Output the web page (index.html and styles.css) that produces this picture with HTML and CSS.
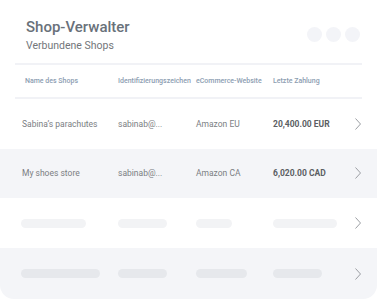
FILE: index.html
```html
<!DOCTYPE html>
<html lang="de">
<head>
<meta charset="utf-8">
<title>Shop-Verwalter</title>
<link rel="stylesheet" href="styles.css">
</head>
<body>
<div class="card">
  <header class="top">
    <div class="titles">
      <h1 class="title">Shop-Verwalter</h1>
      <p class="subtitle">Verbundene Shops</p>
    </div>
    <div class="dots"><span class="dot"></span><span class="dot"></span><span class="dot"></span></div>
  </header>
  <div class="thead">
    <span class="th">Name des Shops</span>
    <span class="th">Identifizierungszeichen</span>
    <span class="th">eCommerce-Website</span>
    <span class="th">Letzte Zahlung</span>
    <span></span>
  </div>
  <div class="row">
    <span class="cell">Sabina’s parachutes</span>
    <span class="cell">sabinab@...</span>
    <span class="cell">Amazon EU</span>
    <span class="cell amount">20,400.00 EUR</span>
    <svg class="chev" viewBox="0 0 6 12" width="6" height="12"><path d="M0.5 0.5 L5.5 6 L0.5 11.5" fill="none" stroke="#9b9ea3" stroke-width="1"/></svg>
  </div>
  <div class="row alt">
    <span class="cell">My shoes store</span>
    <span class="cell">sabinab@...</span>
    <span class="cell">Amazon CA</span>
    <span class="cell amount">6,020.00 CAD</span>
    <svg class="chev" viewBox="0 0 6 12" width="6" height="12"><path d="M0.5 0.5 L5.5 6 L0.5 11.5" fill="none" stroke="#9b9ea3" stroke-width="1"/></svg>
  </div>
  <div class="row">
    <span class="bar" style="width:65px"></span>
    <span class="bar" style="width:49px"></span>
    <span class="bar" style="width:36px"></span>
    <span class="bar" style="width:64px"></span>
    <svg class="chev" viewBox="0 0 6 12" width="6" height="12"><path d="M0.5 0.5 L5.5 6 L0.5 11.5" fill="none" stroke="#9b9ea3" stroke-width="1"/></svg>
  </div>
  <div class="row alt last">
    <span class="bar" style="width:79px"></span>
    <span class="bar" style="width:49px"></span>
    <span class="bar" style="width:51px"></span>
    <span class="bar" style="width:49px"></span>
    <svg class="chev" viewBox="0 0 6 12" width="6" height="12"><path d="M0.5 0.5 L5.5 6 L0.5 11.5" fill="none" stroke="#9b9ea3" stroke-width="1"/></svg>
  </div>
</div>
</body>
</html>
```

FILE: styles.css
```css
* { box-sizing: border-box; }
html, body { margin: 0; padding: 0; background: #ffffff; }
body { font-family: Roboto, "Liberation Sans", sans-serif; width: 377px; height: 299px; overflow: hidden; }

.card {
  width: 377px;
  height: 299px;
  background: #ffffff;
  border-radius: 0 0 14px 14px;
  overflow: hidden;
  display: flex;
  flex-direction: column;
}

.top {
  height: 63px;
  display: flex;
  justify-content: space-between;
  align-items: flex-start;
  padding: 18px 17px 0 26px;
}
.title {
  margin: 0;
  font-size: 15px;
  line-height: 18px;
  font-weight: 500;
  color: #69717a;
}
.subtitle {
  margin: 4px 0 0;
  font-size: 10.5px;
  line-height: 12px;
  color: #73767a;
}
.dots { display: flex; gap: 4px; margin-top: 9px; }
.dot { width: 15px; height: 15px; border-radius: 50%; background: #f3f4f8; }

.thead {
  margin: 0 15px;
  height: 36px;
  border-top: 2px solid #f1f2f6;
  border-bottom: 2px solid #f1f2f6;
  display: grid;
  grid-template-columns: 93px 78px 77px 82px 6px;
  align-items: center;
  padding-left: 10px;
}
.th { font-size: 7px; font-weight: 500; color: #8c9db1; white-space: nowrap; }

.row {
  height: 50px;
  display: grid;
  grid-template-columns: 96px 78px 77px 82px 6px;
  align-items: center;
  padding-left: 22px;
}
.row.alt { background: #f4f5f8; }
.row.last { height: 51px; }
.cell { font-size: 8.5px; color: #7b7e83; white-space: nowrap; }
.cell.amount { font-weight: 700; color: #5b5e63; }
.chev { display: block; }

.bar { display: block; height: 9px; border-radius: 5px; background: #f2f3f5; }
.row.alt .bar { background: #e6e8ec; }
.row .bar:first-child { margin-left: -1px; }
```
